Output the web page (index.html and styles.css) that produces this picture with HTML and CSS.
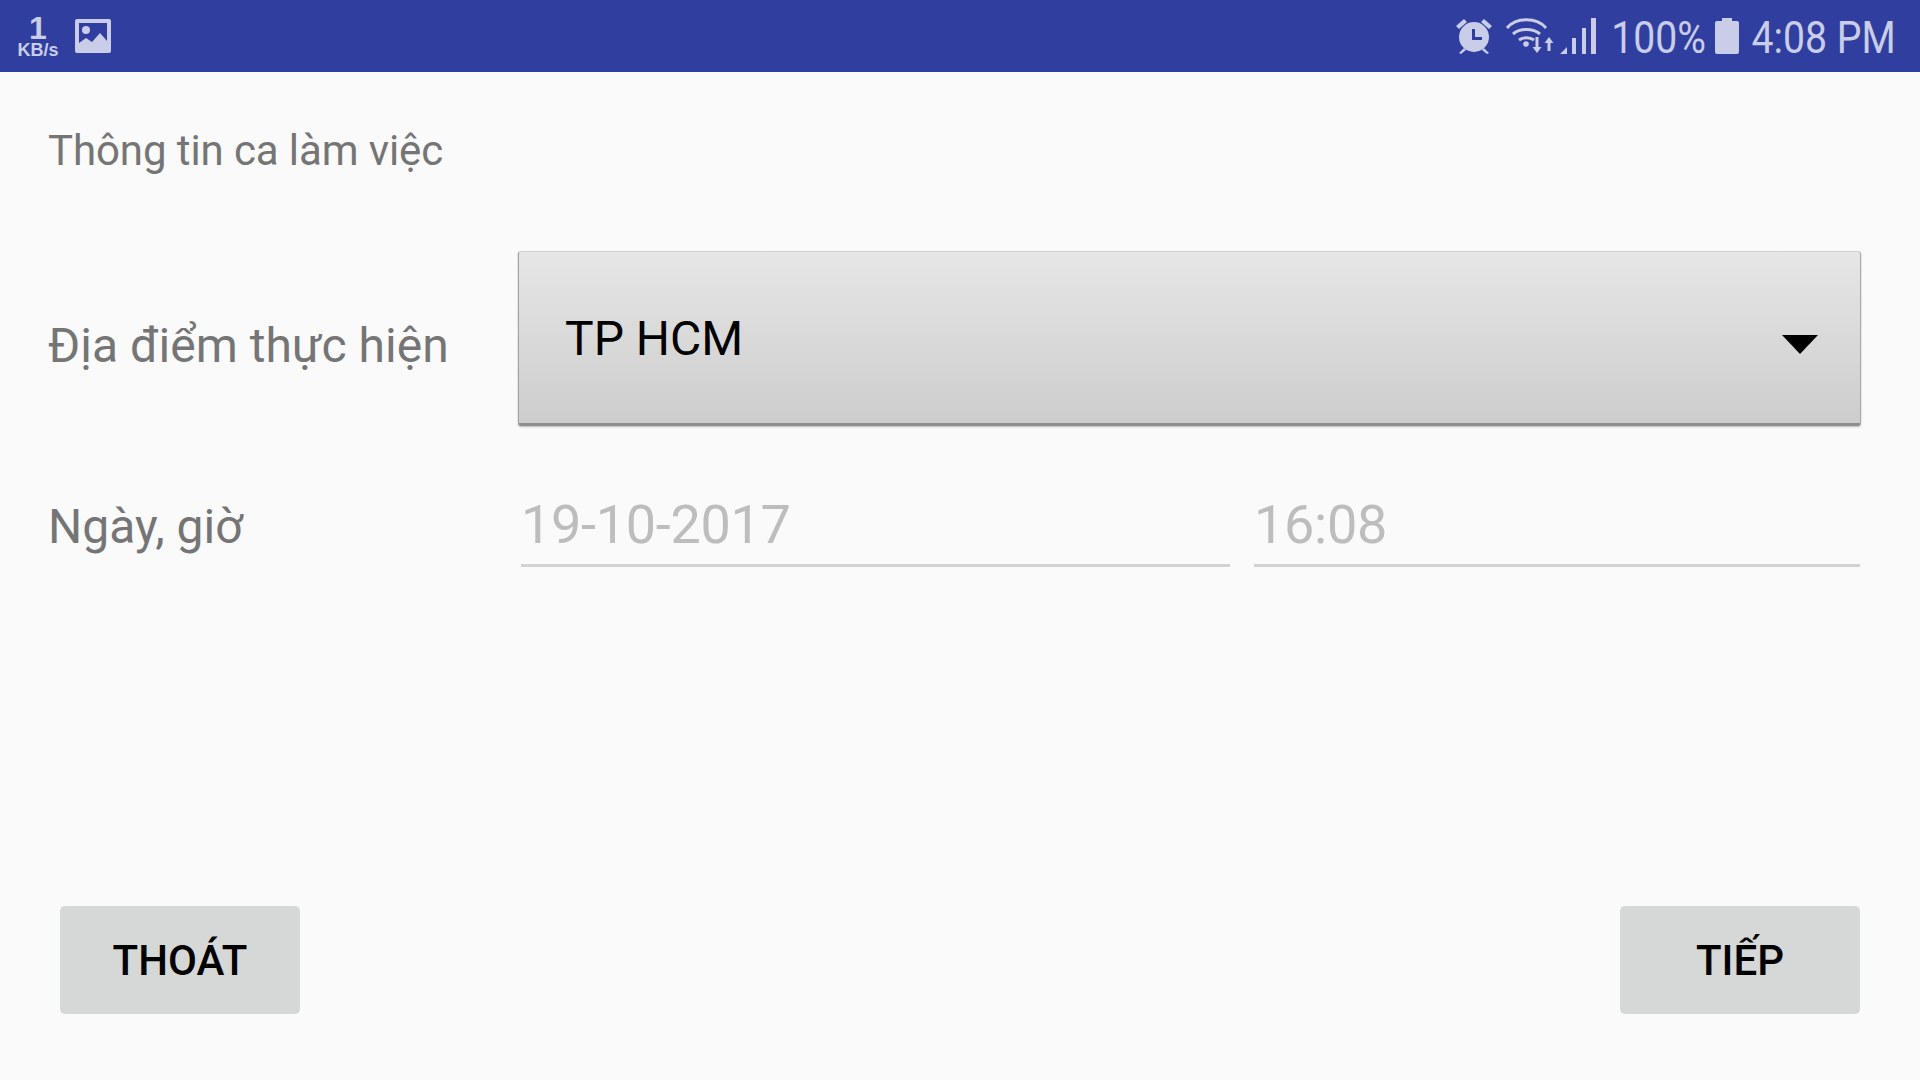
FILE: index.html
```html
<!DOCTYPE html>
<html lang="vi">
<head>
  <meta charset="UTF-8">
  <title>Thông tin ca làm việc</title>
  <link rel="stylesheet" href="styles.css">
</head>
<body>

  <!-- Status bar -->
  <header class="status-bar">
    <div class="status-left">
      <div class="net-speed">
        <span class="net-value">1</span>
        <span class="net-unit">KB/s</span>
      </div>
      <svg class="icon-picture" width="36" height="34" viewBox="0 0 36 34">
        <path fill="#c9cde8" fill-rule="evenodd" d="M2 0h32a2 2 0 0 1 2 2v30a2 2 0 0 1-2 2H2a2 2 0 0 1-2-2V2a2 2 0 0 1 2-2zM4 4v20l7-5 6 4 8-9 7 8V4z"/>
        <circle cx="11" cy="11" r="4" fill="#c9cde8"/>
      </svg>
    </div>
    <div class="status-right">
      <svg class="icon-alarm" width="36" height="36" viewBox="0 0 36 36">
        <g fill="#c9cde8">
          <path fill-rule="evenodd" d="M18 4a15 15 0 1 1 0 30 15 15 0 0 1 0-30zM16 11v11h10v-3h-7v-8z"/>
          <path d="M0 8l8-7 3 3-8 7zM36 8l-8-7-3 3 8 7zM3 35l5-5 2 2-5 4zM33 35l-5-5-2 2 5 4z"/>
        </g>
      </svg>
      <svg class="icon-wifi" width="48" height="36" viewBox="0 0 48 36">
        <g fill="none" stroke="#c9cde8" stroke-width="3">
          <path d="M1 10C10 -1 31 -1 40 10"/>
          <path d="M7 16c7-6 20-6 27 0"/>
          <path d="M13 22c4-3 11-3 15 0"/>
        </g>
        <circle cx="20" cy="26" r="2.800" fill="#c9cde8"/>
        <path fill="#c9cde8" d="M29.500 19h3v10h3l-4.500 6-4.500-6h3zM41.500 33h3v-8h3l-4.500-6-4.500 6h3z"/>
      </svg>
      <svg class="icon-signal" width="36" height="36" viewBox="0 0 36 36">
        <path fill="#c9cde8" d="M0 36l7-7v7zM12 20h4v16h-4zM22 10h4v26h-4zM31 0h5v36h-5z"/>
      </svg>
      <span class="status-text battery-text">100%</span>
      <svg class="icon-battery" width="24" height="36" viewBox="0 0 24 36">
        <path fill="#c9cde8" d="M7 0h10v3h5a2 2 0 0 1 2 2v29a2 2 0 0 1-2 2H2a2 2 0 0 1-2-2V5a2 2 0 0 1 2-2h5z"/>
      </svg>
      <span class="status-text clock">4:08 PM</span>
    </div>
  </header>

  <!-- Form -->
  <main class="screen">
    <h1 class="screen-title">Thông tin ca làm việc</h1>

    <div class="form-row place-row">
      <label class="field-label place-label">Địa điểm thực hiện</label>
      <div class="spinner">
        <span class="spinner-value">TP HCM</span>
        <span class="spinner-arrow"></span>
      </div>
    </div>

    <div class="form-row date-row">
      <label class="field-label date-label">Ngày, giờ</label>
      <div class="date-fields">
        <div class="text-field date-field">19-10-2017</div>
        <div class="text-field time-field">16:08</div>
      </div>
    </div>

    <div class="actions">
      <button class="btn" type="button">THOÁT</button>
      <button class="btn" type="button">TIẾP</button>
    </div>
  </main>

</body>
</html>
```

FILE: styles.css
```css
html, body {
  margin: 0;
  height: 100%;
}

body {
  display: flex;
  flex-direction: column;
  width: 1920px;
  height: 1080px;
  overflow: hidden;
  font-family: 'Roboto', sans-serif;
  background: #fafafa;
}

/* Status bar */
.status-bar {
  flex: none;
  display: flex;
  justify-content: space-between;
  align-items: center;
  height: 72px;
  padding: 0 24px 0 17px;
  background: #303f9f;
  color: #c9cde8;
}

.status-left, .status-right {
  display: flex;
  align-items: center;
}

.net-speed {
  display: flex;
  flex-direction: column;
  align-items: center;
  width: 42px;
  padding-top: 4px;
  font-family: 'Liberation Sans', sans-serif;
  font-weight: bold;
}

.net-value {
  font-size: 32px;
  line-height: 24px;
}

.net-unit {
  font-size: 18px;
  line-height: 20px;
}

.icon-picture {
  margin-left: 16px;
}

/* the phone's status font is narrower than Roboto */
.status-text {
  display: inline-block;
  margin-top: 3px;
  font-size: 45px;
  line-height: 69px;
  transform: scaleX(0.87);
  transform-origin: right center;
}

.icon-wifi {
  margin-left: 14px;
}

.icon-signal {
  margin-left: 6px;
}

.battery-text {
  margin-left: 1px;
}

.icon-battery {
  margin-left: 10px;
}

.clock {
  margin-left: -9px;
}

/* Form */
.screen {
  flex: 1;
  display: flex;
  flex-direction: column;
  padding: 0 59px 66px 48px;
  color: #757575;
}

.screen-title {
  margin: 55px 0 0;
  font-size: 42px;
  font-weight: normal;
  line-height: 48px;
  letter-spacing: -0.1px;
}

.form-row {
  display: flex;
  align-items: center;
}

.field-label {
  flex: none;
  width: 470px;
  font-size: 48px;
}

.place-label {
  margin-top: 14px;
}

.date-label {
  margin-top: 12px;
}

.place-row {
  margin-top: 76px;
}

.spinner {
  flex: 1;
  display: flex;
  justify-content: space-between;
  align-items: center;
  height: 175px;
  box-sizing: border-box;
  padding: 0 42px 0 46px;
  border: 1px solid #d2d2d2;
  border-bottom: 3px solid #8e8e8e;
  border-right-color: #a8a8a8;
  border-left-color: #a0a0a0;
  border-radius: 3px;
  background: linear-gradient(to bottom, #e6e6e6, #cdcdcd);
  box-shadow: 0 1px 2px rgba(0, 0, 0, 0.25);
  color: #000;
}

.spinner-value {
  font-size: 48px;
  margin-top: 1px;
}

.spinner-arrow {
  width: 0;
  height: 0;
  margin-top: 13px;
  border-left: 18px solid transparent;
  border-right: 18px solid transparent;
  border-top: 19px solid #000;
}

.date-row {
  margin-top: 47px;
}

.date-fields {
  flex: 1;
  display: flex;
  gap: 24px;
  margin-left: 3px;
  margin-right: 1px;
}

.text-field {
  box-sizing: border-box;
  height: 94px;
  padding-top: 17px;
  border-bottom: 3px solid #d2d2d2;
  color: #bdbdbd;
  font-size: 54px;
  line-height: 70px;
  letter-spacing: -0.3px;
}

.date-field {
  width: 709px;
}

.time-field {
  flex: 1;
}

.actions {
  margin-top: auto;
  display: flex;
  justify-content: space-between;
  padding: 0 1px 0 12px;
}

.btn {
  width: 240px;
  height: 108px;
  border: none;
  border-radius: 5px;
  background: #d6d7d7;
  color: #000;
  font-family: inherit;
  font-size: 42px;
  font-weight: 500;
}
```
